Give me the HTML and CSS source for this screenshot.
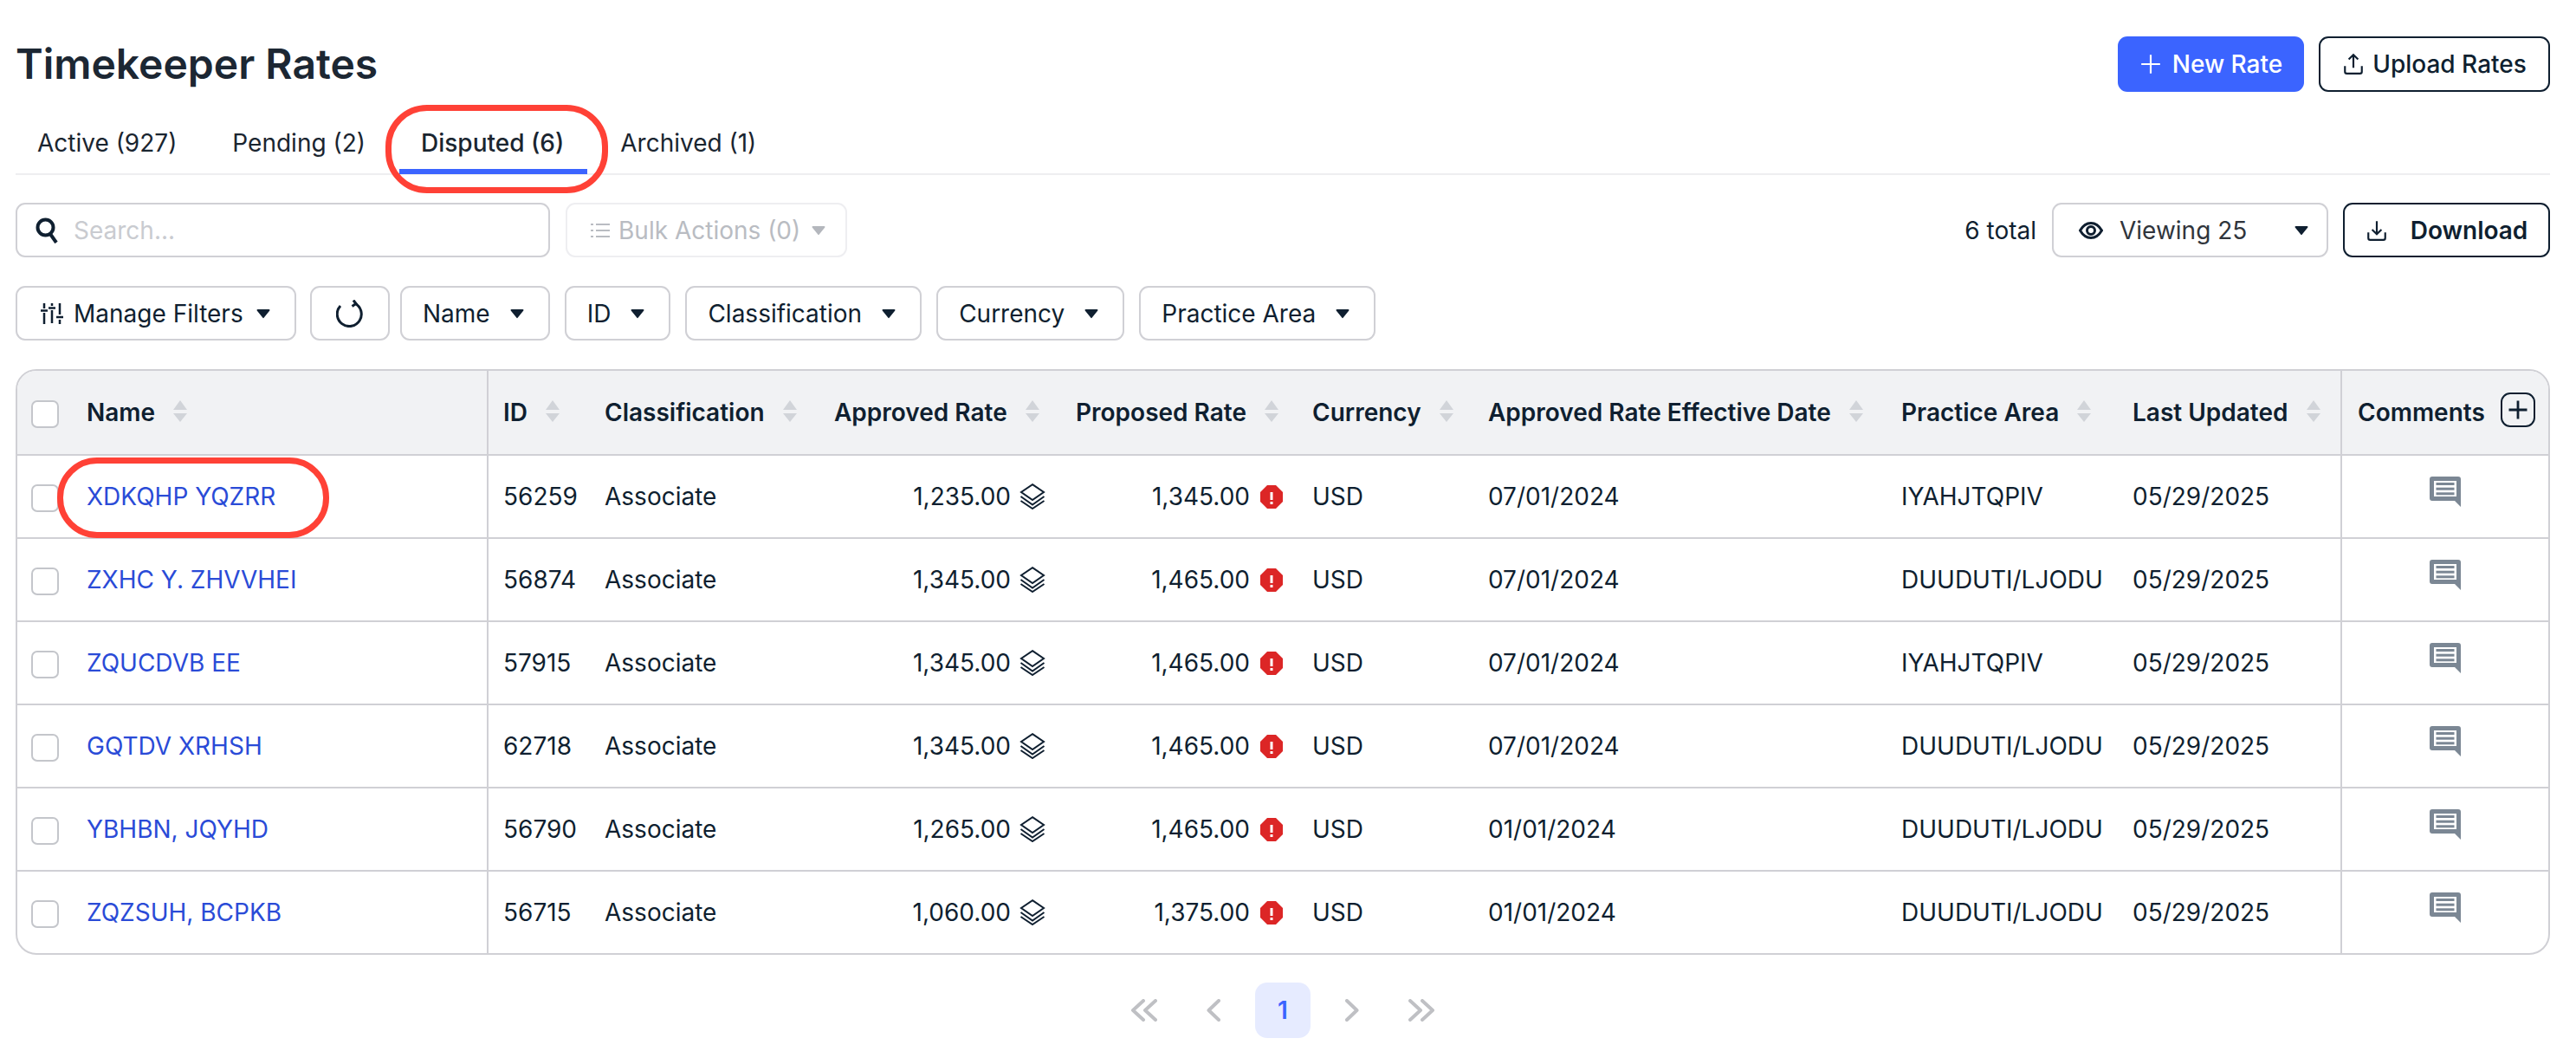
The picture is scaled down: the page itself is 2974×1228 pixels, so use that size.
FILE: index.html
```html
<!DOCTYPE html>
<html lang="en">
<head>
<meta charset="utf-8">
<title>Timekeeper Rates</title>
<link rel="stylesheet" href="styles.css">
</head>
<body>
<svg class="defs" width="0" height="0" aria-hidden="true">
  <symbol id="caret" viewBox="0 0 16 12"><path d="M1.5 1h13a1 1 0 0 1 .8 1.6L8.8 10.6a1 1 0 0 1-1.6 0L.7 2.6A1 1 0 0 1 1.500 1z"/></symbol>
  <symbol id="sort" viewBox="0 0 16 25"><path class="up" d="M8 0L16 11H0z"/><path class="down" d="M0 15h16L8 25z"/></symbol>
  <symbol id="layers" viewBox="0 0 30 30" fill="none" stroke="currentColor" stroke-width="2"><path d="M15 1.200L28 10L15 19L2 10z"/><path d="M1.500 15L15 24.500L28.500 15"/><path d="M1.500 20L15 29L28.500 20"/></symbol>
  <symbol id="alert" viewBox="0 0 26 27"><path fill="#dc2626" d="M8 0h10l8 8v11l-8 8H8l-8-8V8z"/><rect fill="#fff" x="11.500" y="8" width="3" height="9"/><rect fill="#fff" x="11.500" y="19" width="3" height="3"/></symbol>
  <symbol id="comment" viewBox="0 0 36 35"><path fill="#7b8794" fill-rule="evenodd" d="M3 0h30a3 3 0 0 1 3 3v32l-7-7H3a3 3 0 0 1-3-3V3a3 3 0 0 1 3-3zM5 5v18h26V5z"/><rect fill="#7b8794" x="7.500" y="7" width="21" height="3"/><rect fill="#7b8794" x="7.500" y="12.700" width="21" height="3"/><rect fill="#7b8794" x="7.500" y="18.300" width="21" height="3"/></symbol>
</svg>
<main class="page">
  <header class="top">
    <h1 class="title">Timekeeper Rates</h1>
    <div class="actions">
      <button class="btn primary"><svg class="ico" viewBox="0 0 24 24" fill="none" stroke="currentColor" stroke-width="2"><path d="M12 2v20M2 12h20"/></svg>New Rate</button>
      <button class="btn outline"><svg class="ico" viewBox="0 0 24 24" fill="none" stroke="currentColor" stroke-width="2"><path d="M12 16V2M7 7l5-5 5 5M3 14v6a2 2 0 0 0 2 2h14a2 2 0 0 0 2-2v-6"/></svg>Upload Rates</button>
    </div>
  </header>

  <nav class="tabs">
    <a class="tab">Active (927)</a>
    <a class="tab">Pending (2)</a>
    <a class="tab current">Disputed (6)<span class="oval oval-tab"></span></a>
    <a class="tab">Archived (1)</a>
  </nav>

  <section class="toolbar">
    <div class="search">
      <svg class="search-ico" viewBox="0 0 26 30" fill="none" stroke="#0f1f30" stroke-width="4"><circle cx="11.500" cy="11.500" r="9"/><path d="M17 19l7 10"/></svg>
      <span class="placeholder">Search...</span>
    </div>
    <button class="ctl bulk"><svg class="ico-list" viewBox="0 0 22 18" fill="none" stroke="currentColor" stroke-width="2"><path d="M6 2h16M6 9h16M6 16h16M0 2h3M0 9h3M0 16h3"/></svg>Bulk Actions (0)<svg class="caret"><use href="#caret"/></svg></button>
    <div class="spacer"></div>
    <span class="total">6 total</span>
    <button class="ctl viewing"><svg class="ico-eye" viewBox="0 0 28 20" fill="none" stroke="#0f1f30" stroke-width="3"><path d="M1.500 10C5 4 9 1.500 14 1.500S23 4 26.500 10C23 16 19 18.500 14 18.500S5 16 1.500 10z"/><circle cx="14" cy="10" r="4.500"/></svg><span class="viewing-label">Viewing 25</span><svg class="caret"><use href="#caret"/></svg></button>
    <button class="btn outline download"><svg class="ico" viewBox="0 0 24 24" fill="none" stroke="currentColor" stroke-width="2"><path d="M12 2v14M7 11l5 5 5-5M3 14v6a2 2 0 0 0 2 2h14a2 2 0 0 0 2-2v-6"/></svg>Download</button>
  </section>

  <section class="filters">
    <button class="ctl f-manage"><svg class="ico-sliders" viewBox="0 0 26 24" fill="none" stroke="#0f1f30" stroke-width="2.500"><path d="M4 0v6M4 11v13M13 0v3M13 8v15M22 0v13M22 19v5M0 8.500h8M9 5.500h8M18 16h8"/></svg>Manage Filters<svg class="caret"><use href="#caret"/></svg></button>
    <button class="ctl f-refresh"><svg class="ico-refresh" viewBox="0 0 32 32" fill="none" stroke="#0f1f30" stroke-width="3"><path d="M5 7A14 14 0 1 0 21.500 4"/><path d="M20 0.500L23 4.500L18.500 7.500"/></svg></button>
    <button class="ctl f-item">Name<svg class="caret"><use href="#caret"/></svg></button>
    <button class="ctl f-item">ID<svg class="caret"><use href="#caret"/></svg></button>
    <button class="ctl f-item">Classification<svg class="caret"><use href="#caret"/></svg></button>
    <button class="ctl f-item">Currency<svg class="caret"><use href="#caret"/></svg></button>
    <button class="ctl f-item">Practice Area<svg class="caret"><use href="#caret"/></svg></button>
  </section>

  <div class="table-wrap">
    <table class="grid">
      <colgroup>
        <col class="c-name"><col class="c-id"><col class="c-class"><col class="c-appr"><col class="c-prop"><col class="c-cur"><col class="c-date"><col class="c-area"><col class="c-upd"><col class="c-com">
      </colgroup>
      <thead>
        <tr>
          <th class="name-cell div-r"><span class="check"></span><span class="th-in">Name<svg class="sort"><use href="#sort"/></svg></span></th>
          <th><span class="th-in">ID<svg class="sort"><use href="#sort"/></svg></span></th>
          <th><span class="th-in">Classification<svg class="sort"><use href="#sort"/></svg></span></th>
          <th><span class="th-in">Approved Rate<svg class="sort"><use href="#sort"/></svg></span></th>
          <th><span class="th-in">Proposed Rate<svg class="sort"><use href="#sort"/></svg></span></th>
          <th><span class="th-in">Currency<svg class="sort"><use href="#sort"/></svg></span></th>
          <th><span class="th-in">Approved Rate Effective Date<svg class="sort"><use href="#sort"/></svg></span></th>
          <th><span class="th-in">Practice Area<svg class="sort"><use href="#sort"/></svg></span></th>
          <th class="div-r"><span class="th-in">Last Updated<svg class="sort active"><use href="#sort"/></svg></span></th>
          <th class="com-head"><span class="th-in">Comments<span class="plus"><svg viewBox="0 0 24 24" fill="none" stroke="#0f1f30" stroke-width="2.400"><path d="M12 3v18M3 12h18"/></svg></span></span></th>
        </tr>
      </thead>
      <tbody>
        <tr>
          <td class="name-cell div-r"><span class="check"></span><a class="link">XDKQHP YQZRR</a><span class="oval oval-name"></span></td>
          <td>56259</td><td>Associate</td>
          <td class="num appr"><span class="num-in">1,235.00<svg class="layers"><use href="#layers"/></svg></span></td>
          <td class="num prop"><span class="num-in">1,345.00<svg class="alert"><use href="#alert"/></svg></span></td>
          <td>USD</td><td>07/01/2024</td><td>IYAHJTQPIV</td><td class="div-r">05/29/2025</td>
          <td class="com"><svg class="comment"><use href="#comment"/></svg></td>
        </tr>
        <tr>
          <td class="name-cell div-r"><span class="check"></span><a class="link">ZXHC Y. ZHVVHEI</a></td>
          <td>56874</td><td>Associate</td>
          <td class="num appr"><span class="num-in">1,345.00<svg class="layers"><use href="#layers"/></svg></span></td>
          <td class="num prop"><span class="num-in">1,465.00<svg class="alert"><use href="#alert"/></svg></span></td>
          <td>USD</td><td>07/01/2024</td><td>DUUDUTI/LJODU</td><td class="div-r">05/29/2025</td>
          <td class="com"><svg class="comment"><use href="#comment"/></svg></td>
        </tr>
        <tr>
          <td class="name-cell div-r"><span class="check"></span><a class="link">ZQUCDVB EE</a></td>
          <td>57915</td><td>Associate</td>
          <td class="num appr"><span class="num-in">1,345.00<svg class="layers"><use href="#layers"/></svg></span></td>
          <td class="num prop"><span class="num-in">1,465.00<svg class="alert"><use href="#alert"/></svg></span></td>
          <td>USD</td><td>07/01/2024</td><td>IYAHJTQPIV</td><td class="div-r">05/29/2025</td>
          <td class="com"><svg class="comment"><use href="#comment"/></svg></td>
        </tr>
        <tr>
          <td class="name-cell div-r"><span class="check"></span><a class="link">GQTDV XRHSH</a></td>
          <td>62718</td><td>Associate</td>
          <td class="num appr"><span class="num-in">1,345.00<svg class="layers"><use href="#layers"/></svg></span></td>
          <td class="num prop"><span class="num-in">1,465.00<svg class="alert"><use href="#alert"/></svg></span></td>
          <td>USD</td><td>07/01/2024</td><td>DUUDUTI/LJODU</td><td class="div-r">05/29/2025</td>
          <td class="com"><svg class="comment"><use href="#comment"/></svg></td>
        </tr>
        <tr>
          <td class="name-cell div-r"><span class="check"></span><a class="link">YBHBN, JQYHD</a></td>
          <td>56790</td><td>Associate</td>
          <td class="num appr"><span class="num-in">1,265.00<svg class="layers"><use href="#layers"/></svg></span></td>
          <td class="num prop"><span class="num-in">1,465.00<svg class="alert"><use href="#alert"/></svg></span></td>
          <td>USD</td><td>01/01/2024</td><td>DUUDUTI/LJODU</td><td class="div-r">05/29/2025</td>
          <td class="com"><svg class="comment"><use href="#comment"/></svg></td>
        </tr>
        <tr>
          <td class="name-cell div-r"><span class="check"></span><a class="link">ZQZSUH, BCPKB</a></td>
          <td>56715</td><td>Associate</td>
          <td class="num appr"><span class="num-in">1,060.00<svg class="layers"><use href="#layers"/></svg></span></td>
          <td class="num prop"><span class="num-in">1,375.00<svg class="alert"><use href="#alert"/></svg></span></td>
          <td>USD</td><td>01/01/2024</td><td>DUUDUTI/LJODU</td><td class="div-r">05/29/2025</td>
          <td class="com"><svg class="comment"><use href="#comment"/></svg></td>
        </tr>
      </tbody>
    </table>
  </div>

  <nav class="pager">
    <svg class="chev dbl" viewBox="0 0 31 26"><path d="M15 2L3 13l12 11M29 2L17 13l12 11"/></svg>
    <svg class="chev sgl" viewBox="0 0 16 26"><path d="M14 2L2.500 13 14 24"/></svg>
    <span class="page-cur">1</span>
    <svg class="chev sgl" viewBox="0 0 16 26"><path d="M2 2l11.500 11L2 24"/></svg>
    <svg class="chev dbl" viewBox="0 0 31 26"><path d="M2 2l12 11L2 24M16 2l12 11-12 11"/></svg>
  </nav>
</main>
</body>
</html>
```

FILE: styles.css
```css
* { box-sizing: border-box; }
html, body { margin: 0; background: #fff; }
body {
  font-family: Inter, "Liberation Sans", sans-serif;
  font-size: 28px;
  color: #0f1f30;
}
.defs { position: absolute; }
button { font: inherit; color: inherit; background: #fff; margin: 0; cursor: pointer; }

.page { padding: 42px 30px 0 18px; }

.top { display: flex; justify-content: space-between; align-items: center; height: 64px; }
.title { margin: 0; font-size: 48px; font-weight: 600; color: #1c2733; line-height: 64px; }
.actions { display: flex; gap: 17px; }

.btn {
  display: inline-flex; align-items: center; justify-content: center;
  height: 64px; border-radius: 11px; font-weight: 500; white-space: nowrap;
}
.btn.primary { width: 215px; background: #3b64ff; color: #fff; border: 0; gap: 12px; }
.btn.outline { width: 267px; border: 2px solid #0f1f30; gap: 9px; }
.ico { width: 26px; height: 26px; flex: none; }

.tabs {
  display: flex; gap: 12px; height: 96px; margin-top: 0;
  border-bottom: 2px solid #eeeef0; padding-top: 24px;
}
.tab {
  position: relative; padding: 0 26px; height: 71px; line-height: 70px;
  color: #1a2530;
}
.tab:first-child { padding-left: 25px; }
.tab.current { font-weight: 500; border-bottom: 6px solid #3b64ff; margin-left: 1px; padding: 0 27px 0 25px; }
.oval { position: absolute; border: 7px solid #ff4136; pointer-events: none; }
.oval-tab { left: -16px; top: -9px; width: 257px; height: 102px; border-radius: 48px; }
.oval-name { left: 46px; top: 2px; width: 314px; height: 93px; border-radius: 46px; }

.toolbar { display: flex; align-items: center; margin-top: 32px; height: 63px; }
.filters { display: flex; align-items: center; margin-top: 33px; height: 63px; gap: 17px; }
.spacer { flex: 1; }

.ctl {
  display: inline-flex; align-items: center; height: 63px;
  border: 2px solid #d0d0d5; border-radius: 11px; white-space: nowrap; color: #0f1f30;
}
.caret { width: 16px; height: 12px; fill: #0f1f30; flex: none; }

.search {
  width: 617px; height: 63px; border: 2px solid #d0d0d5; border-radius: 11px;
  display: flex; align-items: center; padding-left: 21px; gap: 18px;
}
.search-ico { width: 26px; height: 30px; flex: none; }
.placeholder { color: #c9cbd0; }

.bulk {
  width: 325px; margin-left: 18px; border-color: #eeeef1; color: #b9bcc2;
  padding-left: 27px; gap: 10px;
}
.bulk .caret { fill: #b4b7bd; margin-left: 3px; }
.ico-list { width: 22px; height: 18px; flex: none; }

.total { margin-right: 18px; }
.viewing { width: 319px; padding-left: 29px; margin-right: 17px; color: #30353c; }
.viewing-label { margin-left: 19px; }
.viewing .caret { margin-left: auto; margin-right: 15px; }
.ico-eye { width: 28px; height: 20px; flex: none; }
.btn.download { width: 239px; height: 63px; gap: 26px; font-weight: 600; }

.f-manage { width: 324px; padding-left: 27px; gap: 12px; }
.f-manage .caret { margin-left: 3px; }
.ico-sliders { width: 26px; height: 24px; flex: none; }
.f-refresh { width: 92px; justify-content: center; margin-left: -1px; margin-right: -5px; }
.ico-refresh { width: 32px; height: 32px; }
.f-item { padding: 0 28px 0 24px; gap: 23px; }

.table-wrap {
  margin-top: 33px; border: 2px solid #d0d0d5; border-radius: 24px; overflow: hidden;
}
.table-wrap .grid { width: 100%; }
.grid { border-collapse: separate; border-spacing: 0; table-layout: fixed; }
.c-name { width: 544px; }
.c-id { width: 117px; }
.c-class { width: 265px; }
.c-appr { width: 279px; }
.c-prop { width: 273px; }
.c-cur { width: 203px; }
.c-date { width: 477px; }
.c-area { width: 267px; }
.c-upd { width: 259px; }
.c-com { width: auto; }

th, td { padding: 0 0 0 17px; text-align: left; white-space: nowrap; position: relative; }
th {
  height: 98px; background: #f1f2f4; font-weight: 600;
  border-bottom: 2px solid #d0d0d5;
}
td { height: 96px; border-bottom: 2px solid #d0d0d5; }
tbody tr:last-child td { border-bottom: 0; height: 94px; }
.div-r { border-right: 2px solid #d0d0d5; }
.th-in { display: inline-flex; align-items: center; gap: 21px; }
.sort { width: 16px; height: 25px; fill: #d1d4d9; flex: none; margin-top: -3px; }
.sort.active .down { fill: #3a4654; }
th.name-cell, td.name-cell { padding-left: 80px; overflow: visible; }
.check {
  position: absolute; left: 16px; top: 50%; width: 32px; height: 32px; margin-top: -14px;
  background: #fff; border: 2px solid #c4c6cb; border-radius: 7px;
}
.link { color: #2a4bd7; }
.num { text-align: right; }
td.appr { padding: 0 18px 0 0; }
td.prop { padding: 0 17px 0 0; }
.num-in { display: inline-flex; align-items: center; }
.appr .num-in { gap: 10px; }
.prop .num-in { gap: 12px; }
.layers { width: 30px; height: 30px; flex: none; }
.alert { width: 26px; height: 27px; flex: none; }
td.com { text-align: center; padding: 0; }
.comment { width: 36px; height: 35px; display: block; margin: 0 auto 11px; }
th.com-head { padding-left: 18px; }
.com-head .th-in { gap: 18px; }
.plus {
  display: inline-flex; align-items: center; justify-content: center;
  width: 40px; height: 40px; border: 2px solid #0f1f30; border-radius: 11px; margin-top: -6px;
}
.plus svg { width: 28px; height: 28px; }

.pager { display: flex; align-items: center; justify-content: center; margin-top: 32px; height: 64px; }
.chev { height: 26px; fill: none; stroke: #bfc0c4; stroke-width: 4; stroke-linecap: round; stroke-linejoin: round; flex: none; }
.chev.dbl { width: 31px; }
.chev.sgl { width: 16px; }
.page-cur {
  width: 64px; height: 64px; border-radius: 14px; background: #e6ebff; color: #3b64ff;
  display: flex; align-items: center; justify-content: center; font-weight: 600;
  margin: 0 40px;
}
.chev.dbl:first-child { margin-right: 57px; }
.chev.dbl:last-child { margin-left: 57px; }
```
